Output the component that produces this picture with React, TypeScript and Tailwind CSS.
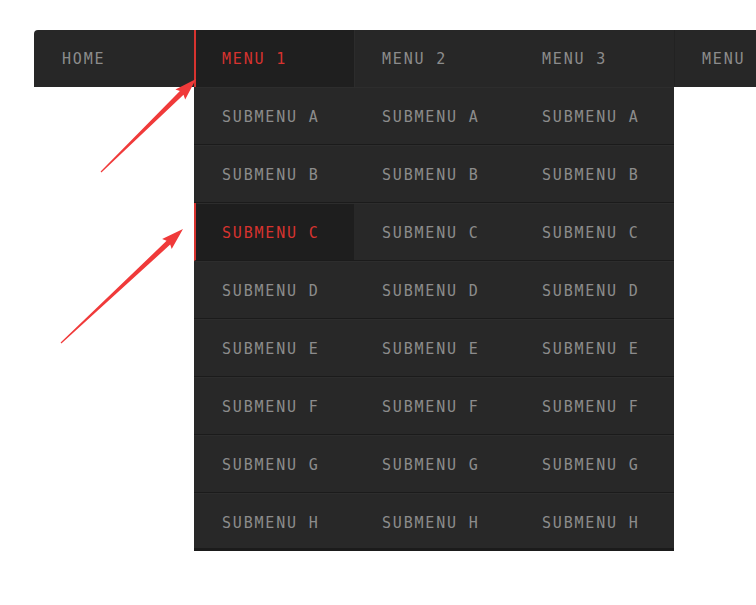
import React from "react";

const navItems = ["HOME", "MENU 1", "MENU 2", "MENU 3", "MENU"];
const subLetters = ["A", "B", "C", "D", "E", "F", "G", "H"];

type Pt = [number, number];

// tapered arrow polygon from tail to tip
const arrowPoints = (tail: Pt, tip: Pt) => {
  const dx = tip[0] - tail[0];
  const dy = tip[1] - tail[1];
  const len = Math.hypot(dx, dy);
  const ux = dx / len;
  const uy = dy / len;
  const nx = -uy;
  const ny = ux;
  const headLen = 20;
  const headW = 7;
  const shaftW = 2.6;
  const bx = tip[0] - ux * headLen;
  const by = tip[1] - uy * headLen;
  const pts: Pt[] = [
    [tail[0] + nx * 0.6, tail[1] + ny * 0.6],
    [bx + nx * shaftW, by + ny * shaftW],
    [bx + nx * headW - ux * 2, by + ny * headW - uy * 2],
    tip,
    [bx - nx * headW - ux * 2, by - ny * headW - uy * 2],
    [bx - nx * shaftW, by - ny * shaftW],
    [tail[0] - nx * 0.6, tail[1] - ny * 0.6],
  ];
  return pts.map((p) => `${p[0].toFixed(1)},${p[1].toFixed(1)}`).join(" ");
};

const Cell = ({ label, active, last }: { label: string; active?: boolean; last?: boolean }) => (
  <div
    className={`h-[58px] flex items-center shadow-[inset_0_1px_0_#2d2d2d] ${
      last ? "border-b-[3px] border-[#1b1b1b] pt-[5px]" : "border-b border-[#1b1b1b] pt-[3px]"
    } ${active ? "bg-[#1e1e1e] border-l-2 border-l-[#d6332f] pl-[26px] text-[#d6332f]" : "pl-[28px] text-[#8c8c8c]"}`}
  >
    {label}
  </div>
);

const App = () => {
  return (
    <div
      className="relative w-[756px] h-[605px] bg-white overflow-hidden pt-[30px] pl-[34px] text-[15px] tracking-[1.8px]"
      style={{ fontFamily: '"DejaVu Sans Mono", "Liberation Mono", monospace' }}
    >
      <nav className="flex w-[800px] h-[57px] bg-[#272727] rounded-tl-[4px]">
        {navItems.map((item, i) => (
          <div
            key={item + i}
            className={`relative w-[160px] shrink-0 flex items-center pt-[2px] ${
              i === 1
                ? "bg-[#1f1f1f] border-l-2 border-[#d6332f] pl-[26px] text-[#d6332f]"
                : i === 2
                ? "border-l border-[#2c2c2c] pl-[27px] text-[#8c8c8c]"
                : i === 4
                ? "border-l border-[#222] pl-[27px] text-[#8c8c8c]"
                : "pl-[28px] text-[#8c8c8c]"
            }`}
          >
            {item}
            {i === 1 && (
              <div className="absolute top-full -left-[2px] w-[480px] grid grid-cols-3 bg-[#282828] z-10">
                {subLetters.map((l, r) =>
                  [0, 1, 2].map((c) => (
                    <Cell
                      key={l + c}
                      label={`SUBMENU ${l}`}
                      active={l === "C" && c === 0}
                      last={r === subLetters.length - 1}
                    />
                  ))
                )}
              </div>
            )}
          </div>
        ))}
      </nav>

      <svg className="absolute inset-0 z-20 pointer-events-none" width="756" height="605">
        <polygon points={arrowPoints([101, 172], [196, 79])} fill="#f03a3a" />
        <polygon points={arrowPoints([61, 343], [183, 229])} fill="#f03a3a" />
      </svg>
    </div>
  );
};

export default App;
